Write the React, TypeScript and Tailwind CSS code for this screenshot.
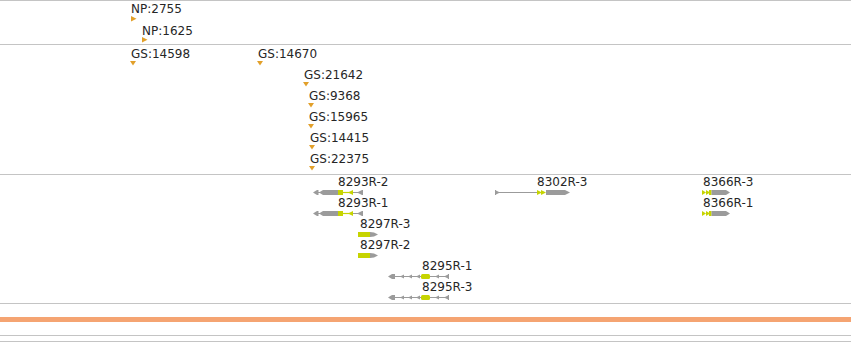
const GRAY = "#9b9b9b";
const YEL = "#c6d400";
const MARK = "#e2a02a";

type Feat = { label: string; x: number; row: number };

const npFeats: Feat[] = [
  { label: "NP:2755", x: 131, row: 0 },
  { label: "NP:1625", x: 142, row: 1 },
];

const gsFeats: Feat[] = [
  { label: "GS:14598", x: 131, row: 0 },
  { label: "GS:14670", x: 258, row: 0 },
  { label: "GS:21642", x: 304, row: 1 },
  { label: "GS:9368", x: 309, row: 2 },
  { label: "GS:15965", x: 309, row: 3 },
  { label: "GS:14415", x: 310, row: 4 },
  { label: "GS:22375", x: 310, row: 5 },
];

type Gene = { label: string; lx: number; gx: number; row: number; kind: "a" | "b" | "c" | "d" | "e" };

const genes: Gene[] = [
  { label: "8293R-2", lx: 338, gx: 313, row: 0, kind: "a" },
  { label: "8293R-1", lx: 338, gx: 313, row: 1, kind: "a" },
  { label: "8297R-3", lx: 360, gx: 358, row: 2, kind: "b" },
  { label: "8297R-2", lx: 360, gx: 358, row: 3, kind: "b" },
  { label: "8295R-1", lx: 422, gx: 388, row: 4, kind: "c" },
  { label: "8295R-3", lx: 422, gx: 388, row: 5, kind: "c" },
  { label: "8302R-3", lx: 537, gx: 495, row: 0, kind: "d" },
  { label: "8366R-3", lx: 703, gx: 702, row: 0, kind: "e" },
  { label: "8366R-1", lx: 703, gx: 702, row: 1, kind: "e" },
];

function Label({ text, x, y }: { text: string; x: number; y: number }) {
  return (
    <span
      className="absolute whitespace-nowrap text-[12px] leading-[14px] text-[#262626]"
      style={{ left: x, top: y }}
    >
      {text}
    </span>
  );
}

function Flag({ x, y }: { x: number; y: number }) {
  return (
    <svg className="absolute" style={{ left: x, top: y }} width="6" height="6" viewBox="0 0 6 6">
      <polygon points="0,0 5.5,2.8 0,5.5" fill={MARK} />
    </svg>
  );
}

function Down({ x, y }: { x: number; y: number }) {
  return (
    <svg className="absolute" style={{ left: x, top: y }} width="6" height="5" viewBox="0 0 6 5">
      <polygon points="0,0 6,0 3,4.5" fill={MARK} />
    </svg>
  );
}

function Glyph({ kind }: { kind: Gene["kind"] }) {
  if (kind === "a")
    return (
      <svg width="51" height="7" viewBox="0 0 51 7">
        <polygon points="0,3.5 4,1 5.5,1 5.5,6 4,6" fill={GRAY} />
        <line x1="5" y1="3.5" x2="7" y2="3.5" stroke={GRAY} />
        <polygon points="6,3.5 10,1 25,1 25,6 10,6" fill={GRAY} />
        <rect x="25" y="1" width="5" height="5" fill={YEL} />
        <line x1="30" y1="3.5" x2="40" y2="3.5" stroke={YEL} strokeWidth="1.2" />
        <polygon points="35,3.5 40,1 40,6" fill={YEL} />
        <line x1="40" y1="3.5" x2="49" y2="3.5" stroke={GRAY} />
        <polygon points="44,3.5 49,1 49,6" fill={GRAY} />
        <rect x="49" y="1" width="1" height="5" fill={GRAY} />
      </svg>
    );
  if (kind === "b")
    return (
      <svg width="21" height="7" viewBox="0 0 21 7">
        <rect x="0" y="1" width="12" height="5" fill={YEL} />
        <polygon points="12,1 16,1.5 20,3.5 16,5.5 12,6" fill={GRAY} />
      </svg>
    );
  if (kind === "c")
    return (
      <svg width="62" height="7" viewBox="0 0 62 7">
        <polygon points="0,3.5 4,1 7,1 7,6 4,6" fill={GRAY} />
        <line x1="7" y1="3.5" x2="60" y2="3.5" stroke={GRAY} />
        <polygon points="12,3.5 16,1.5 16,5.5" fill={GRAY} />
        <polygon points="20,3.5 24,1.5 24,5.5" fill={GRAY} />
        <polygon points="28,3.5 32,1.5 32,5.5" fill={GRAY} />
        <rect x="33" y="1" width="9" height="5" rx="1.5" fill={YEL} />
        <polygon points="47,3.5 51,1.5 51,5.5" fill={GRAY} />
        <polygon points="56,3.5 60,1.5 60,5.5" fill={GRAY} />
        <rect x="60" y="1" width="1" height="5" fill={GRAY} />
      </svg>
    );
  if (kind === "d")
    return (
      <svg width="76" height="7" viewBox="0 0 76 7">
        <rect x="0" y="1" width="1" height="5" fill={GRAY} />
        <polygon points="1,1.5 5,3.5 1,5.5" fill={GRAY} />
        <line x1="1" y1="3.5" x2="43" y2="3.5" stroke={GRAY} />
        <polygon points="42,1 47,3.5 42,6" fill={YEL} />
        <polygon points="46,1 51,3.5 46,6" fill={YEL} />
        <polygon points="51,1 70,1 75,3.5 70,6 51,6" fill={GRAY} />
      </svg>
    );
  return (
    <svg width="29" height="7" viewBox="0 0 29 7">
      <polygon points="0,1 4,3.5 0,6" fill={YEL} />
      <polygon points="4,1 8,3.5 4,6" fill={YEL} />
      <rect x="7" y="1" width="2.5" height="5" fill={YEL} />
      <polygon points="9.5,1 24,1 28,3.5 24,6 9.5,6" fill={GRAY} />
    </svg>
  );
}

export default function App() {
  return (
    <div className="flex flex-col w-[851px] h-[343px] bg-white overflow-hidden font-['DejaVu_Sans',sans-serif]">
      {/* NP track */}
      <div className="relative h-[45px] shrink-0 border-y border-[#c4c4c4]">
        {npFeats.map((f) => (
          <div key={f.label}>
            <Label text={f.label} x={f.x} y={1 + f.row * 22} />
            <Flag x={f.x} y={15 + f.row * 21} />
          </div>
        ))}
      </div>

      {/* GS track */}
      <div className="relative h-[130px] shrink-0 border-b border-[#c4c4c4]">
        {gsFeats.map((f) => (
          <div key={f.label}>
            <Label text={f.label} x={f.x} y={2 + f.row * 21} />
            <Down x={f.x - 1} y={16 + f.row * 21} />
          </div>
        ))}
      </div>

      {/* gene track */}
      <div className="relative h-[129px] shrink-0 border-b border-[#c4c4c4]">
        {genes.map((g) => (
          <div key={g.label}>
            <Label text={g.label} x={g.lx} y={0 + g.row * 21} />
            <div className="absolute" style={{ left: g.gx, top: 14 + g.row * 21 }}>
              <Glyph kind={g.kind} />
            </div>
          </div>
        ))}
      </div>

      {/* overview */}
      <div className="flex flex-col gap-[13px] pt-[13px]">
        <div className="h-[5px] bg-[#f5a472]" />
        <div className="h-[7px] border-y border-[#c4c4c4]" />
      </div>
    </div>
  );
}
